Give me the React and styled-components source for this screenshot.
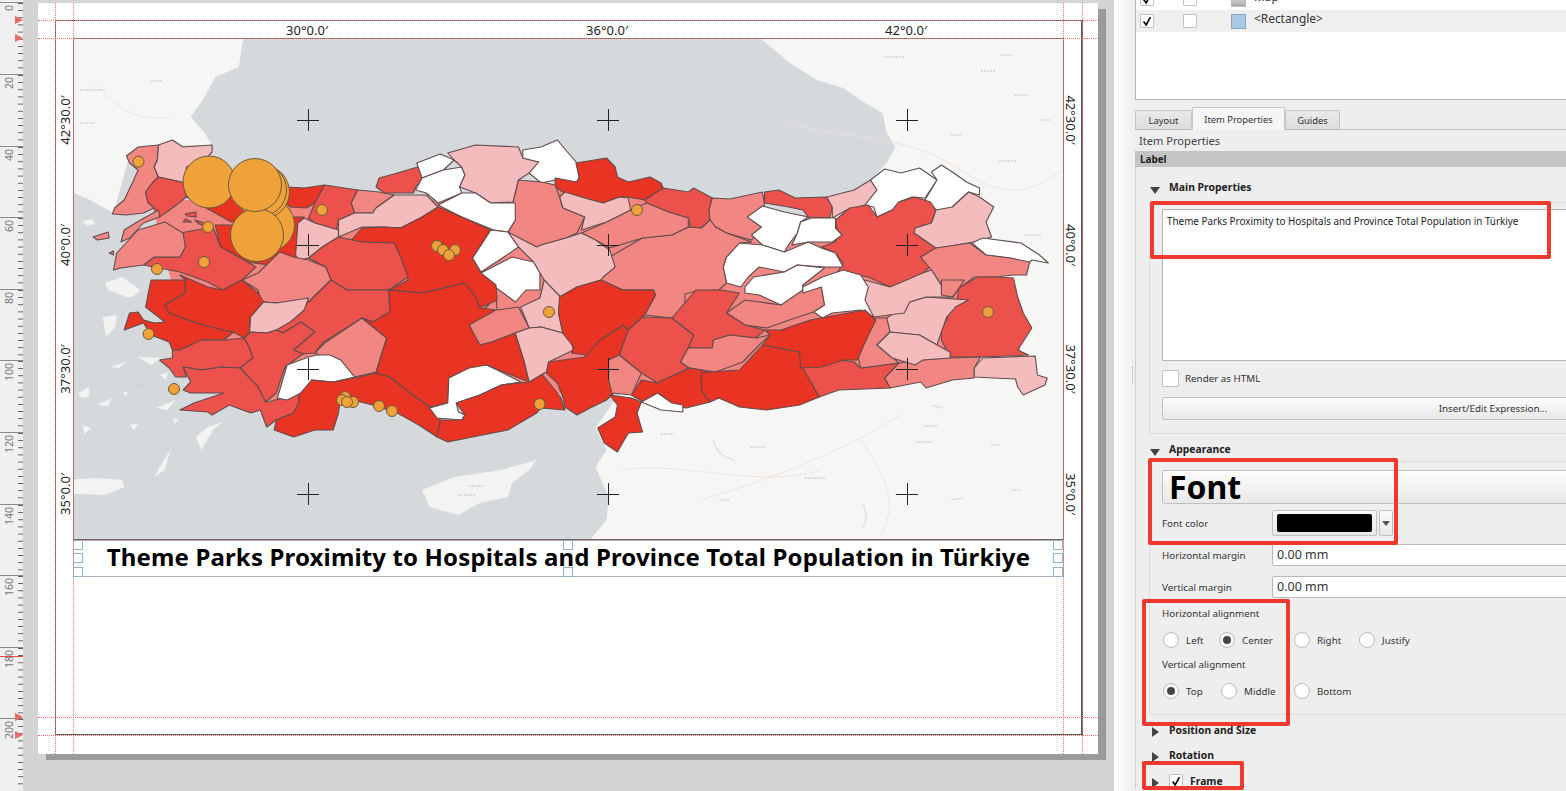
import React from "react";
import styled, { createGlobalStyle } from "styled-components";

const SANS = '"Noto Sans", "Open Sans", "Liberation Sans", sans-serif';

const GlobalStyle = createGlobalStyle`
  html, body { margin: 0; padding: 0; width: 1566px; height: 791px; overflow: hidden; background: #d4d4d4; }
  * { box-sizing: border-box; }
`;

const Window = styled.div`
  display: flex;
  width: 1566px;
  height: 791px;
  overflow: hidden;
  font-family: ${SANS};
`;

/* ---------- ruler ---------- */

const Ruler = styled.div`
  position: relative;
  flex: 0 0 23px;
  height: 791px;
  padding-top: 2.4px;
  background: #f0f0f0;
  overflow: hidden;
`;

const RulerSegment = styled.div`
  height: 71.6px;
  padding: 2px 0 0 3px;
  border-top: 1px solid #8a8a8a;
  background-image: linear-gradient(#555 1px, transparent 1px);
  background-size: 5px 7.16px;
  background-position: right 0;
  background-repeat: repeat-y;
`;

const RulerText = styled.span`
  display: block;
  width: 12px;
  writing-mode: vertical-rl;
  transform: rotate(180deg);
  font-size: 10.5px;
  line-height: 12px;
  color: #777;
`;

const RulerArrow = styled.i`
  position: absolute;
  left: 15px;
  top: ${(p) => p.$y - 4}px;
  border-left: 8px solid #e96a64;
  border-top: 4px solid transparent;
  border-bottom: 4px solid transparent;
`;

const RulerCursor = styled.i`
  position: absolute;
  left: 0;
  top: 656px;
  width: 23px;
  height: 1px;
  background: #e8483f;
`;

/* ---------- layout canvas ---------- */

const Canvas = styled.div`
  flex: 0 0 1091px;
  height: 791px;
  padding: 3px 0 0 15px;
  background: #d4d4d4;
`;

const Page = styled.div`
  position: relative;
  width: 1060px;
  height: 751px;
  background: #fff;
  box-shadow: 8px 6px 0 #9a9a9a;
`;

const GuideH = styled.i`
  position: absolute;
  left: 0;
  right: 0;
  top: ${(p) => p.$y}px;
  border-top: 1px dotted #f4736c;
`;

const GuideV = styled.i`
  position: absolute;
  top: 0;
  bottom: 0;
  left: ${(p) => p.$x}px;
  border-left: 1px dotted #f4736c;
`;

const PageFrame = styled.div`
  position: absolute;
  left: 17px;
  top: 17px;
  width: 1028px;
  height: 715px;
  border: 1px solid #5c5560;
  border-right-width: 2px;
`;

const MapFrame = styled.div`
  position: absolute;
  left: 35px;
  top: 35px;
  width: 991px;
  height: 502px;
  border: 1px solid #7d5f62;
  overflow: hidden;
`;

const MapSvg = styled.svg`
  display: block;
  width: 989px;
  height: 500px;
`;

const GridLabel = styled.span`
  position: absolute;
  left: ${(p) => p.$x}px;
  top: ${(p) => p.$y}px;
  font-size: 13px;
  line-height: 14px;
  color: #222;
  white-space: nowrap;
  transform: translate(-50%, -50%) rotate(${(p) => p.$turn || 0}deg);
`;

const TitleItem = styled.div`
  position: absolute;
  left: 35px;
  top: 537px;
  width: 991px;
  height: 37px;
  display: flex;
  align-items: center;
  justify-content: center;
  padding-bottom: 4px;
  background: #fff;
  border: 1px dashed #6d5a78;
  outline: 1px solid #a9b0ba;
  outline-offset: -1px;
  font-size: 24px;
  font-weight: 700;
  color: #000;
  white-space: nowrap;
  letter-spacing: 0.14px;
`;

const Handle = styled.i`
  position: absolute;
  left: ${(p) => p.$x}px;
  top: ${(p) => p.$y}px;
  width: 10px;
  height: 10px;
  background: #fff;
  border: 1.5px solid #8fb3d6;
`;

/* ---------- right panel ---------- */

const Panel = styled.aside`
  position: relative;
  flex: 1;
  height: 791px;
  overflow: hidden;
  padding-left: 21px;
  background: linear-gradient(to right, #fff 0, #eeeeee 21px);
  font-size: 9.8px;
  color: #333;
`;

const SplitterDots = styled.i`
  position: absolute;
  left: 18px;
  top: 367px;
  height: 17px;
  border-left: 1px dotted #aaa;
`;

const TreeList = styled.div`
  height: 100px;
  width: 520px;
  background: #fff;
  border: 1px solid #b4b4b4;
  border-top: 0;
  overflow: hidden;
`;

const TreeRow = styled.div`
  display: flex;
  align-items: center;
  height: 22px;
  margin-top: ${(p) => (p.$cut ? "-12px" : "0")};
  background: ${(p) => (p.$shade ? "#efefef" : "#fff")};
  padding-left: 4px;
  font-size: 11.9px;
  color: #333;
`;

const TreeCell = styled.span`
  flex: 0 0 ${(p) => p.$w}px;
  display: flex;
  align-items: center;
`;

const TreeName = styled.span`
  margin: -1px 0 6px -1px;
`;

const ItemSwatch = styled.i`
  width: 15px;
  height: 15px;
  background: ${(p) => p.$fill};
  border: 1px solid ${(p) => p.$edge};
`;

const CheckBox = styled.span`
  display: inline-flex;
  align-items: center;
  justify-content: center;
  width: ${(p) => p.$size || 14}px;
  height: ${(p) => p.$size || 14}px;
  background: #fff;
  border: 1px solid #c2c2c2;
  border-radius: 1px;
  flex: none;
`;

const TabBar = styled.div`
  display: flex;
  align-items: flex-end;
  width: 520px;
  height: 23px;
  margin-top: 7px;
  border-bottom: 1px solid #bdbdbd;
`;

const Tab = styled.div`
  display: flex;
  align-items: center;
  justify-content: center;
  width: ${(p) => p.$w}px;
  height: ${(p) => (p.$active ? 23 : 20)}px;
  margin-bottom: -1px;
  border: 1px solid #c6c6c6;
  border-bottom: ${(p) => (p.$active ? "0" : "1px solid #bdbdbd")};
  border-radius: 2px 2px 0 0;
  background: ${(p) => (p.$active ? "#f6f6f6" : "linear-gradient(#eaeaea, #dcdcdc)")};
  font-size: 9.4px;
  color: #333;
`;

const PanelTitle = styled.div`
  height: 21px;
  padding: 3px 0 0 4px;
  font-size: 11.1px;
  line-height: 15px;
  color: #444;
`;

const SectionBar = styled.div`
  width: 520px;
  height: 16px;
  padding-left: 5px;
  background: #c4c4c4;
  font-weight: 700;
  font-size: 9.9px;
  line-height: 16px;
  color: #222;
`;

const PanelBody = styled.div`
  width: 720px;
  padding: 12px 0 0 13px;
  border-left: 1px solid #cfcfcf;
`;

const GroupTitle = styled.div`
  display: flex;
  align-items: center;
  height: 16px;
  margin-top: ${(p) => p.$top || 0}px;
  font-weight: 700;
  font-size: 10.4px;
  color: #222;
`;

const Caret = styled.i`
  flex: none;
  transform: translateY(${(p) => (p.$open ? 3 : 2)}px);
  width: 0;
  ${(p) =>
    p.$open
      ? `margin: 0 9px 0 1px; border-top: 7px solid #444; border-left: 5.5px solid transparent; border-right: 5.5px solid transparent;`
      : `margin: 0 10px 0 3px; border-left: 7px solid #444; border-top: 5.5px solid transparent; border-bottom: 5.5px solid transparent;`}
`;

const FrameText = styled.span`
  margin-left: 7px;
`;

const GroupBox = styled.div`
  margin-top: ${(p) => p.$top}px;
  padding: ${(p) => p.$pad}px 0 0 12px;
  height: ${(p) => p.$h}px;
  border: 1px solid #dcdcdc;
  border-radius: 2px;
`;

const TextBox = styled.div`
  width: 680px;
  height: 152px;
  padding: 4px 4px;
  background: #fff;
  border: 1px solid #b5b5b5;
  font-size: 9.87px;
  line-height: 15px;
  color: #1c1c28;
  white-space: nowrap;
`;

const CheckRow = styled.div`
  display: flex;
  align-items: center;
  gap: 6px;
  height: 17px;
  margin-top: 9px;
`;

const PushButton = styled.div`
  display: flex;
  align-items: center;
  justify-content: ${(p) => (p.$left ? "flex-start" : "center")};
  width: 662px;
  height: ${(p) => p.$h}px;
  margin-top: ${(p) => p.$top}px;
  padding-left: ${(p) => (p.$left ? 6 : 0)}px;
  background: linear-gradient(#fbfbfb, #e8e8e8);
  border: 1px solid #c0c0c0;
  border-radius: 2px;
`;

const FontSample = styled.span`
  font-size: 32px;
  font-weight: 700;
  line-height: 32px;
  color: #000;
`;

const FormRow = styled.div`
  display: flex;
  align-items: center;
  height: ${(p) => p.$h}px;
  margin-top: ${(p) => p.$top}px;
`;

const FormLabel = styled.span`
  flex: 0 0 110px;
`;

const ColorButton = styled.div`
  width: 105px;
  height: 26px;
  padding: 3px 4px;
  background: linear-gradient(#fbfbfb, #e8e8e8);
  border: 1px solid #c0c0c0;
  border-radius: 2px;
`;

const ColorFill = styled.div`
  height: 100%;
  background: #000;
  border-radius: 2px;
`;

const ColorMenu = styled.div`
  display: flex;
  align-items: center;
  justify-content: center;
  width: 14px;
  height: 26px;
  margin-left: 2px;
  background: linear-gradient(#fbfbfb, #e8e8e8);
  border: 1px solid #c0c0c0;
  border-radius: 2px;

  &::after {
    content: "";
    border-top: 5px solid #555;
    border-left: 4px solid transparent;
    border-right: 4px solid transparent;
  }
`;

const NumberInput = styled.div`
  width: 560px;
  height: 22px;
  padding-left: 4px;
  background: #fff;
  border: 1px solid #b9b9b9;
  border-radius: 2px;
  font-size: 12.5px;
  line-height: 20px;
  color: #333;
`;

const SubLabel = styled.div`
  height: 14px;
  margin-top: ${(p) => p.$top}px;
  line-height: 14px;
`;

const RadioRow = styled.div`
  display: flex;
  align-items: center;
  height: 18px;
  margin-top: 10px;
  margin-left: 1px;
`;

const RadioOption = styled.span`
  flex: 0 0 ${(p) => p.$w}px;
  display: flex;
  align-items: center;
  gap: 7px;
`;

const RadioDot = styled.i`
  display: flex;
  align-items: center;
  justify-content: center;
  width: 16px;
  height: 16px;
  background: #fff;
  border: 1px solid #b9b9b9;
  border-radius: 50%;

  &::after {
    content: "";
    width: 8px;
    height: 8px;
    border-radius: 50%;
    background: ${(p) => (p.$on ? "#444" : "transparent")};
  }
`;

const Annotation = styled.i`
  position: absolute;
  left: ${(p) => p.$x}px;
  top: ${(p) => p.$y}px;
  width: ${(p) => p.$w}px;
  height: ${(p) => p.$h}px;
  border: 4px solid #ee3a2e;
  border-radius: 2px;
`;

/* ---------- map data ---------- */

// the outlines were traced from two crops with different x scales, west and east of the seam
const mapX = (x) => (x < 530 ? x * 1.0714 : 540 + (x - 540) * 1.0909);
const pts = (s) =>
  s
    .trim()
    .split(/\s+/)
    .map((pair) => {
      const [x, y] = pair.split(",").map(Number);
      return `${mapX(x).toFixed(1)},${y}`;
    })
    .join(" ");

const TONES = { d: "#e93323", m: "#ec524b", l: "#f18683", p: "#f5bcbd", w: "#ffffff" };

const LAND = [
  "55,39 226,39 222,67 200,77 190,97 177,117 190,133 197,145 147,145 120,155 105,213 83,200 55,186",
  "742,39 1030,39 1030,540 585,540 600,520 602,497 590,467 600,450 590,428 608,400 700,300 842,180 857,163 865,147 857,133 853,113 837,103 817,88 793,80 768,63",
  "393,490 423,477 467,470 500,460 493,470 477,483 473,497 447,503 427,515 400,507",
  "55,480 90,478 113,480 115,487 97,495 55,493",
  "207,422 198,430 187,450 182,437 193,427",
  "158,450 153,470 143,477 152,460",
  "97,283 113,277 130,290 123,297 117,297 100,290",
  "95,317 108,315 107,327 98,337",
  "102,367 117,362 110,368",
  "128,357 150,358 140,365",
  "72,393 82,387 82,397 75,398",
  "145,408 163,400 155,410",
  "90,405 103,398 100,406",
  "76,221 85,219 88,224 80,226",
  "148,375 156,372 154,380",
  "114,392 118,392 117,397",
  "160,418 166,420 162,424",
  "120,425 128,424 124,430",
  "76,425 84,428 78,434",
];

// fills the slivers left between the traced provinces
const UNDERLAY = "140,200 400,200 480,190 575,190 900,230 980,350 800,380 620,390 400,400 250,400 170,330";

const PROVINCES = [
  ["l", "117,156 128,147 147,145 146,160 143,167 147,177 142,182 135,192 137,202 143,208 133,213 117,215 104,214 106,208 115,200 123,182 128,170 120,163"],
  ["p", "147,145 160,140 170,147 197,145 197,152 190,160 173,167 172,183 160,180 147,177 143,167 146,160"],
  ["m", "147,177 172,183 173,197 160,208 148,217 143,208 137,202 135,192 142,182"],
  ["l", "112,242 115,230 127,222 147,210 148,217 133,223 120,238"],
  ["d", "172,183 230,180 267,187 283,188 302,185 293,203 285,208 270,207 263,200 240,215 215,222 173,197"],
  ["d", "200,225 215,225 275,217 283,217 277,225 275,258 250,265 230,262 205,247"],
  ["m", "302,185 333,190 327,203 330,213 315,220 313,230 293,223 287,218 293,203"],
  ["l", "333,190 353,192 367,195 350,208 347,213 330,213 327,203"],
  ["p", "367,195 397,195 408,207 393,217 373,228 357,227 337,227 315,237 315,220 330,213 347,213 350,208"],
  ["m", "350,187 353,178 370,173 392,166 395,177 387,187 385,193 358,193"],
  ["w", "388,163 410,154 423,160 413,170 393,178"],
  ["w", "393,178 413,170 430,167 433,175 428,187 430,193 408,203 397,193 387,190"],
  ["p", "417,153 443,145 483,147 487,158 502,162 493,173 483,180 478,202 457,203 443,193 428,187 433,175 430,167 423,160"],
  ["w", "487,150 540,147 555,140 565,153 573,163 575,178 572,183 553,180 540,183 493,173 502,162 487,158"],
  ["d", "572,163 600,158 608,167 610,177 620,182 640,177 650,183 652,188 635,200 620,197 612,197 597,203 580,198 560,192 553,187 553,178 573,182 575,177"],
  ["m", "652,188 675,192 680,188 697,198 694,210 695,220 687,228 677,227 675,218 657,212 637,203 635,200"],
  ["l", "697,198 713,199 743,192 745,205 730,217 742,227 733,240 710,233 700,227 695,220 694,210"],
  ["m", "745,192 758,190 773,198 802,197 807,207 805,218 785,217 780,210 767,207 745,203"],
  ["p", "802,197 827,190 842,180 848,190 837,205 820,210 807,218 807,207"],
  ["w", "842,180 855,169 870,173 887,168 903,180 892,198 880,197 868,202 862,210 848,217 845,207 837,205 848,190"],
  ["w", "898,172 907,165 917,172 930,182 942,188 942,195 932,192 917,207 905,213 892,200 903,180"],
  ["m", "823,208 840,205 848,217 862,210 868,202 883,197 897,202 902,210 898,223 883,228 882,233 902,248 888,257 898,265 890,273 873,285 860,287 840,277 812,272 817,263 810,253 797,247 810,242 812,233 810,220"],
  ["p", "932,192 942,197 955,207 948,222 953,237 937,242 905,248 902,248 882,233 883,228 898,223 902,210 917,207"],
  ["w", "935,243 945,238 980,243 997,255 1005,263 990,260 987,263 970,258 948,255"],
  ["l", "902,248 933,243 948,255 970,258 988,262 985,275 973,275 957,277 937,277 922,290 918,297 908,287 898,270 888,257"],
  ["m", "940,277 957,277 973,278 977,297 982,313 990,328 977,350 987,355 945,357 915,357 907,340 907,330 915,312 922,297 923,288"],
  ["p", "937,368 945,358 993,356 995,375 1004,378 1002,385 982,395 977,387 975,379 955,378 937,377"],
  ["l", "855,378 868,363 888,360 915,358 943,357 937,368 937,378 917,380 893,388 888,382 860,388"],
  ["m", "778,368 815,360 827,362 833,368 868,363 855,378 860,388 813,390 795,397 788,383"],
  ["l", "842,318 858,318 860,332 848,345 862,357 868,363 833,368 830,353 838,340"],
  ["p", "857,318 878,302 893,297 932,300 920,307 912,317 907,332 903,345 887,335 860,332"],
  ["p", "848,345 860,332 887,335 903,345 915,352 915,358 890,360 883,365 862,358"],
  ["p", "837,280 860,287 890,273 898,270 908,287 918,297 893,297 878,302 873,313 845,317 835,300"],
  ["l", "907,280 928,280 922,290 917,297 907,295"],
  ["w", "729,217 743,206 763,212 785,217 778,222 775,233 768,243 763,252 743,245 733,235 742,227"],
  ["w", "778,222 788,218 810,218 810,228 816,235 807,242 785,242 770,245 775,233"],
  ["w", "710,257 722,243 743,245 763,252 785,242 797,248 810,253 817,267 800,267 775,265 763,272 740,267 730,277 723,287 710,283 707,267"],
  ["w", "727,287 735,277 763,272 775,265 800,268 780,285 780,293 797,287 798,300 800,305 790,310 780,302 760,305 740,295 727,293"],
  ["l", "710,313 727,300 760,305 780,290 797,287 800,305 790,312 773,318 747,328 727,325"],
  ["w", "780,287 798,277 817,270 833,275 840,287 837,300 845,317 833,310 807,313 798,318 790,312 800,305 797,287 780,293"],
  ["l", "603,257 633,238 660,235 675,227 687,228 695,220 700,227 710,233 733,242 722,243 710,257 707,267 710,283 703,290 682,291 672,294 672,307 660,318 635,315 645,295 643,290 615,290 595,280 597,277"],
  ["l", "577,233 600,222 622,210 637,203 657,212 675,218 675,227 660,235 633,238 603,248 590,240"],
  ["p", "557,197 562,192 580,198 597,203 612,197 620,198 622,210 600,222 577,230 580,217 560,208"],
  ["l", "483,180 540,182 553,185 557,197 560,208 580,217 573,233 563,238 540,245 500,247 473,233 480,220 478,202"],
  ["p", "500,247 540,245 563,238 577,233 590,240 603,250 608,267 597,277 595,280 573,287 557,297 507,280 503,273 497,262 483,247 473,232"],
  ["l", "437,325 462,297 463,310 483,307 493,328 480,333 458,342 447,345 442,337"],
  ["w", "408,205 430,193 443,193 457,203 480,203 480,220 473,232 460,230 430,217"],
  ["w", "457,230 473,232 483,247 468,258 448,272 440,258 448,245"],
  ["w", "448,273 477,257 497,262 503,273 503,290 490,290 480,302 465,290 450,280"],
  ["d", "327,240 337,228 357,227 373,228 393,217 408,207 430,217 457,230 448,245 440,258 448,273 462,285 463,300 447,308 443,297 433,283 417,287 393,293 363,290 380,280 373,257 367,243 337,242"],
  ["p", "275,255 277,223 283,218 293,223 315,230 315,237 300,247 287,258 278,260"],
  ["m", "287,258 300,247 315,237 337,242 367,243 373,257 380,277 362,290 333,290 323,290 308,280 303,267"],
  ["l", "225,280 240,273 260,252 273,257 287,260 303,267 308,280 287,302 257,303 243,302 240,290"],
  ["m", "167,233 198,227 205,247 227,260 238,267 225,280 207,290 193,282 167,272 133,265 143,257 167,257 172,247"],
  ["l", "105,270 108,253 128,230 153,222 170,233 172,247 167,257 143,257 133,265 112,268"],
  ["d", "140,280 172,280 172,293 153,305 157,313 183,323 207,330 217,332 208,340 187,340 167,350 160,350 157,342 140,335 133,323 115,330 120,313 128,312 133,320 143,323 153,322 135,307 138,290"],
  ["d", "167,275 193,287 207,290 225,280 240,293 245,302 233,317 232,332 227,338 217,332 207,330 183,323 157,313 153,305 172,293 172,280"],
  ["m", "308,280 323,290 362,290 363,312 347,322 337,318 300,343 293,353 282,354 273,350 293,332 280,322 263,333 257,330 248,333 232,332 233,317 245,302 257,303 287,302"],
  ["p", "232,332 233,317 245,302 257,303 287,298 283,310 270,322 257,330 248,333"],
  ["m", "160,350 167,350 187,340 208,340 227,338 232,348 235,358 223,368 205,367 187,370 170,367 173,377 163,377 157,368 148,360 160,358"],
  ["m", "227,338 233,332 248,333 257,330 263,333 280,322 293,332 273,350 282,354 265,367 257,393 247,402 240,387 223,368 235,358 232,348"],
  ["m", "170,367 187,370 205,367 223,368 240,387 247,402 278,395 278,403 273,413 257,420 248,427 242,410 233,413 213,405 197,415 193,412 167,410 180,403 208,393 177,393 170,390 177,382"],
  ["l", "293,353 302,343 337,318 360,338 350,372 330,377 317,360 297,355"],
  ["w", "267,365 287,357 295,355 307,355 317,360 330,377 310,382 290,380 282,392 267,400 258,398"],
  ["d", "255,430 257,420 273,413 278,403 278,395 290,380 310,382 330,378 350,373 363,377 382,393 400,407 410,420 407,437 390,425 370,413 347,405 317,397 315,413 310,430 293,430 273,437"],
  ["d", "347,322 363,312 362,290 393,293 417,287 433,283 443,297 447,308 462,310 437,325 447,345 458,342 480,333 488,360 493,382 453,365 418,378 417,403 400,407 382,393 363,377 350,373 360,338 337,318"],
  ["w", "400,408 417,403 418,378 437,368 453,365 467,372 485,382 467,385 447,395 425,403 427,412 433,415 430,420 407,418"],
  ["d", "407,437 410,420 430,420 433,415 425,403 447,395 467,385 493,382 507,373 540,373 558,397 562,410 540,408 500,413 473,430 440,437 417,442"],
  ["p", "485,307 503,298 507,280 558,297 556,313 560,333 540,327 493,328"],
  ["p", "493,328 540,327 560,333 568,343 570,350 547,362 545,372 507,373 493,382 488,360 480,333"],
  ["d", "545,373 547,362 580,357 582,353 592,342 615,325 620,330 615,345 612,355 603,360 603,380 607,393 600,400 585,408 573,415 562,407 560,397 555,383"],
  ["d", "557,297 573,287 595,280 615,290 643,290 645,295 635,315 633,317 620,330 615,325 592,342 582,355 568,353 570,347 560,333 556,313"],
  ["m", "620,330 633,317 660,318 680,335 675,348 668,362 676,368 652,380 647,383 632,373 615,358 612,355 615,345"],
  ["m", "660,318 682,290 705,290 722,293 710,313 727,325 745,330 737,338 713,335 698,340 697,348 675,348 680,335"],
  ["l", "668,362 675,348 697,348 698,340 713,335 737,338 750,335 740,345 725,362 700,372 676,368"],
  ["l", "602,360 612,355 615,358 632,373 623,395 605,393 602,380"],
  ["d", "623,395 632,380 647,383 652,380 677,368 695,372 687,380 687,390 695,402 673,408 660,405 650,395 637,403 627,398"],
  ["w", "632,402 647,393 660,403 670,405 670,412 650,410"],
  ["d", "603,395 623,398 632,402 628,413 633,432 620,433 610,452 598,443 592,428 608,417 610,405"],
  ["d", "687,373 695,372 722,370 743,345 777,352 780,368 795,397 777,405 747,410 722,407 703,398 695,402 687,390"],
  ["d", "745,330 760,330 787,320 837,310 847,320 838,340 830,360 817,360 797,367 778,368 777,352 743,345 750,335"],
  ["m", "172,214 182,212 182,217 174,216"],
  ["m", "172,219 178,222 170,222"],
  ["m", "181,220 195,225 195,228 185,224"],
  ["l", "86,237 100,232 101,238 90,240"],
  ["l", "101,253 105,251 105,255"],
];

const ROADS = [
  "M780 120 C830 140 900 130 960 170 S1040 180 1062 170",
  "M860 440 C880 470 900 500 880 535",
  "M900 415 C860 440 800 470 700 500",
  "M90 80 C120 110 130 120 170 118",
  "M620 470 C680 460 760 490 820 470",
];

const LAKES = [
  "M712 440 C716 452 722 458 734 460",
  "M862 505 C866 512 866 520 862 528",
  "M950 500 L962 498",
  "M930 405 L942 408",
];

// faint place names of the base map, too small to read
const SPECKS = [
  [883, 57, 21], [980, 71, 15], [1013, 95, 14], [998, 161, 18], [1024, 235, 16],
  [749, 447, 16], [914, 442, 17], [804, 478, 20], [922, 426, 14], [660, 434, 13],
  [150, 81, 11], [79, 90, 25], [79, 123, 14], [457, 495, 18], [468, 486, 14], [129, 385, 17],
  [950, 135, 10], [1000, 55, 12], [1040, 120, 10], [990, 445, 8], [1010, 490, 10], [720, 500, 8],
];

const BIG_MARKERS = [
  [267, 225], [262, 192], [259, 190], [256, 235], [254, 185],
];

const SMALL_MARKERS = [
  [137.5, 161.7], [321, 210], [207, 227], [203, 262], [156, 269],
  [436, 246], [442, 250], [454, 250], [448, 255], [636, 210], [548, 312],
  [147.5, 334], [173, 389], [344, 397], [352, 402], [341, 400], [346, 402],
  [378, 406], [391, 411], [538.6, 404], [987, 312],
];

const CROSS_X = [307, 607, 906];
const CROSS_Y = [120, 245, 369, 494];

const TOP_LABELS = [["30°0.0′", 269], ["36°0.0′", 569], ["42°0.0′", 868]];
const SIDE_LABELS = [["42°30.0′", 117], ["40°0.0′", 242], ["37°30.0′", 366], ["35°0.0′", 491]];

function TurkeyMap() {
  return (
    <MapSvg viewBox="73 39 989 500">
      <rect x="60" y="30" width="1010" height="520" fill="#d5d9dc" />
      {LAND.map((p, i) => (
        <polygon key={i} points={pts(p)} fill={i < 2 ? "#f6f6f4" : "#f3f3f1"} />
      ))}
      {ROADS.map((d, i) => (
        <path key={i} d={d} fill="none" stroke="#f0dcdc" strokeWidth="0.8" />
      ))}
      {LAKES.map((d, i) => (
        <path key={i} d={d} fill="none" stroke="#dfe2e3" strokeWidth="1.6" />
      ))}
      {SPECKS.map(([x, y, w], i) => (
        <path key={i} d={`M${x} ${y}h${w}`} stroke="#cfd2d3" strokeWidth="1.4" strokeDasharray="2 1" />
      ))}
      <polygon points={pts(UNDERLAY)} fill={TONES.l} />
      {PROVINCES.map(([tone, p], i) => (
        <polygon key={i} points={pts(p)} fill={TONES[tone]} stroke="#5f4c4c" strokeWidth="1.1" strokeLinejoin="round" />
      ))}
      <g stroke="#6a5a3c" fill="#f0a23a">
        <circle cx="208" cy="182" r="26" />
        {BIG_MARKERS.map(([x, y], i) => (
          <circle key={i} cx={x} cy={y} r="26.5" />
        ))}
        {SMALL_MARKERS.map(([x, y], i) => (
          <circle key={i} cx={x} cy={y} r="5.5" />
        ))}
      </g>
      <g stroke="#222" strokeWidth="1">
        {CROSS_X.map((x) =>
          CROSS_Y.map((y) => (
            <path key={`${x}-${y}`} d={`M${x - 11} ${y + 0.5}H${x + 11}M${x + 0.5} ${y - 11}V${y + 11}`} />
          ))
        )}
      </g>
    </MapSvg>
  );
}

const Tick = ({ size }) => (
  <svg width={size} height={size} viewBox="0 0 14 14">
    <path d="M3 7.5 L6 11.5 L11 2.5" fill="none" stroke="#111" strokeWidth="2" />
  </svg>
);

function Radio({ w, on, children }) {
  return (
    <RadioOption $w={w}>
      <RadioDot $on={on} />
      {children}
    </RadioOption>
  );
}

export default function App() {
  const rulerMarks = Array.from({ length: 11 }, (_, i) => i * 20);
  return (
    <Window>
      <GlobalStyle />
      <Ruler>
        {rulerMarks.map((m) => (
          <RulerSegment key={m}>
            <RulerText>{m}</RulerText>
          </RulerSegment>
        ))}
        {[20, 38, 717, 735].map((y) => (
          <RulerArrow key={y} $y={y} />
        ))}
        <RulerCursor />
      </Ruler>

      <Canvas>
        <Page>
          <PageFrame />
          <MapFrame>
            <TurkeyMap />
          </MapFrame>
          {TOP_LABELS.map(([text, x]) => (
            <GridLabel key={text} $x={x} $y={27}>{text}</GridLabel>
          ))}
          {SIDE_LABELS.map(([text, y]) => (
            <GridLabel key={text} $x={27} $y={y} $turn={-90}>{text}</GridLabel>
          ))}
          {SIDE_LABELS.map(([text, y]) => (
            <GridLabel key={text} $x={1033} $y={y} $turn={90}>{text}</GridLabel>
          ))}
          <TitleItem>Theme Parks Proximity to Hospitals and Province Total Population in Türkiye</TitleItem>
          {[[35, 537], [35, 550], [35, 564], [525, 537], [525, 564], [1015, 537], [1015, 550], [1015, 564]].map(([x, y]) => (
            <Handle key={`${x}-${y}`} $x={x} $y={y} />
          ))}
          <GuideH $y={17} />
          <GuideH $y={35} />
          <GuideH $y={714} />
          <GuideH $y={732} />
          <GuideV $x={17} />
          <GuideV $x={35} />
          <GuideV $x={1025} />
          <GuideV $x={1044} />
        </Page>
      </Canvas>

      <Panel>
        <SplitterDots />
        <TreeList>
          <TreeRow $cut>
            <TreeCell $w={43}><CheckBox><Tick size={12} /></CheckBox></TreeCell>
            <TreeCell $w={48}><CheckBox /></TreeCell>
            <TreeCell $w={24}><ItemSwatch $fill="linear-gradient(#eee, #aaa)" $edge="#bbb" /></TreeCell>
            <TreeName>Map</TreeName>
          </TreeRow>
          <TreeRow $shade>
            <TreeCell $w={43}><CheckBox><Tick size={12} /></CheckBox></TreeCell>
            <TreeCell $w={48}><CheckBox /></TreeCell>
            <TreeCell $w={24}><ItemSwatch $fill="#a9c8e6" $edge="#8aa6bf" /></TreeCell>
            <TreeName>&lt;Rectangle&gt;</TreeName>
          </TreeRow>
        </TreeList>

        <TabBar>
          <Tab $w={57}>Layout</Tab>
          <Tab $w={93} $active>Item Properties</Tab>
          <Tab $w={55}>Guides</Tab>
        </TabBar>
        <PanelTitle>Item Properties</PanelTitle>
        <SectionBar>Label</SectionBar>

        <PanelBody>
          <GroupTitle><Caret $open />Main Properties</GroupTitle>
          <GroupBox $top={7} $pad={6} $h={232}>
            <TextBox>Theme Parks Proximity to Hospitals and Province Total Population in Türkiye</TextBox>
            <CheckRow><CheckBox $size={17} />Render as HTML</CheckRow>
            <PushButton $h={23} $top={10}>Insert/Edit Expression...</PushButton>
          </GroupBox>

          <GroupTitle $top={7}><Caret $open />Appearance</GroupTitle>
          <GroupBox $top={4} $pad={8} $h={254}>
            <PushButton $h={34} $top={0} $left><FontSample>Font</FontSample></PushButton>
            <FormRow $h={26} $top={6}>
              <FormLabel>Font color</FormLabel>
              <ColorButton><ColorFill /></ColorButton>
              <ColorMenu />
            </FormRow>
            <FormRow $h={22} $top={8}>
              <FormLabel>Horizontal margin</FormLabel>
              <NumberInput>0.00 mm</NumberInput>
            </FormRow>
            <FormRow $h={22} $top={10}>
              <FormLabel>Vertical margin</FormLabel>
              <NumberInput>0.00 mm</NumberInput>
            </FormRow>
            <SubLabel $top={9}>Horizontal alignment</SubLabel>
            <RadioRow>
              <Radio w={56}>Left</Radio>
              <Radio w={75} on>Center</Radio>
              <Radio w={65}>Right</Radio>
              <Radio w={70}>Justify</Radio>
            </RadioRow>
            <SubLabel $top={9}>Vertical alignment</SubLabel>
            <RadioRow>
              <Radio w={58} on>Top</Radio>
              <Radio w={73}>Middle</Radio>
              <Radio w={70}>Bottom</Radio>
            </RadioRow>
          </GroupBox>

          <GroupTitle $top={7}><Caret />Position and Size</GroupTitle>
          <GroupTitle $top={9}><Caret />Rotation</GroupTitle>
          <GroupTitle $top={10}>
            <Caret />
            <CheckBox><Tick size={12} /></CheckBox>
            <FrameText>Frame</FrameText>
          </GroupTitle>
        </PanelBody>

        <Annotation $x={36} $y={201} $w={401} $h={58} />
        <Annotation $x={34} $y={458} $w={250} $h={87} />
        <Annotation $x={28} $y={599} $w={148} $h={127} />
        <Annotation $x={28} $y={761} $w={102} $h={29} />
      </Panel>
    </Window>
  );
}
